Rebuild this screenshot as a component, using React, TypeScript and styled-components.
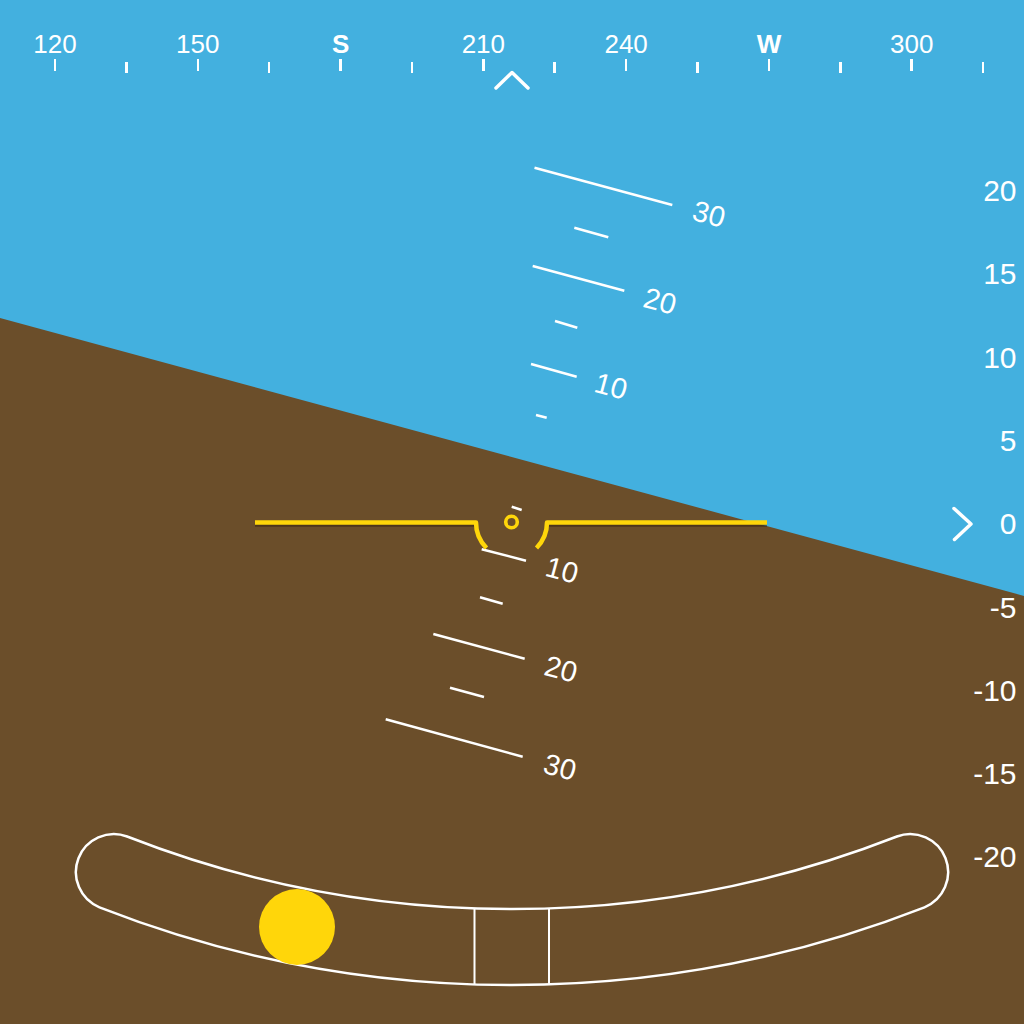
import React from 'react';
import styled, { createGlobalStyle } from 'styled-components';

const SKY = '#43b0df';
const GROUND = '#6b4e2a';
const SYMBOL = '#ffd60a';
const INK = '#ffffff';
const ROLL = 15.1;

const GlobalStyle = createGlobalStyle`
  html, body {
    margin: 0;
    padding: 0;
    background: ${GROUND};
  }
  body {
    font-family: 'Liberation Sans', Arial, sans-serif;
  }
`;

const Screen = styled.div`
  display: grid;
  width: 1024px;
  height: 1024px;
  overflow: hidden;
  background: ${SKY};
  & > * {
    grid-area: 1 / 1;
    min-width: 0;
  }
`;

const Canvas = styled.svg`
  display: block;
  width: 1024px;
  height: 1024px;
`;

const PitchLabel = styled.text`
  font-family: 'Liberation Sans', Arial, sans-serif;
  font-size: 29px;
  fill: ${INK};
`;

/* heading tape */
const HeadingTape = styled.div`
  display: flex;
  flex-direction: column;
  align-self: start;
`;

const HeadingRow = styled.div`
  display: flex;
  align-items: flex-start;
  padding: 30.6px 0 0 19.3px;
`;

const HeadingItem = styled.div`
  flex: none;
  width: 71.4px;
  display: flex;
  flex-direction: column;
  align-items: center;
`;

const HeadingLabel = styled.span<{ $cardinal?: boolean }>`
  height: 26px;
  font-size: 26px;
  line-height: 26px;
  color: ${INK};
  font-weight: ${p => (p.$cardinal ? 700 : 400)};
  white-space: nowrap;
`;

const HeadingTick = styled.span<{ $major?: boolean }>`
  width: 2.5px;
  height: ${p => (p.$major ? 12 : 11)}px;
  margin-top: ${p => (p.$major ? 2.4 : 5.4)}px;
  background: ${INK};
`;

const PointerRow = styled.div`
  display: flex;
  justify-content: center;
  margin-top: -3px;
`;

const Pointer = styled.svg`
  display: block;
  width: 36px;
  height: 20px;
`;

/* pitch scale on the right */
const PitchScale = styled.div`
  display: flex;
  flex-direction: column;
  align-items: flex-end;
  align-self: start;
  padding: 149.4px 7.5px 0 0;
`;

const ScaleRow = styled.div`
  height: 83.3px;
  display: flex;
  align-items: center;
  gap: 27px;
`;

const ScaleValue = styled.span`
  font-size: 30px;
  line-height: 30px;
  color: ${INK};
`;

const Chevron = styled.svg`
  display: block;
  width: 22px;
  height: 36px;
`;

/* slip indicator */
const SlipLayer = styled.div`
  display: flex;
  flex-direction: column;
  justify-content: flex-end;
  padding-bottom: 14px;
`;

const SlipGauge = styled.svg`
  display: block;
  width: 1024px;
  height: 200px;
`;

const headings: (string | null)[] = ['120', null, '150', null, 'S', null, '210', null, '240', null, 'W', null, '300', null];
const scaleValues = [20, 15, 10, 5, 0, -5, -10, -15, -20];

const ladderLines: [number, number, number, number][] = [
  [534.5, 167.7, 672.3, 205],
  [574.3, 227.7, 608.3, 237.3],
  [532.7, 266, 624.3, 290.7],
  [555, 321, 577.3, 327.7],
  [531, 364, 576.7, 376.7],
  [536, 415, 546.7, 417.7],
  [511.7, 506.7, 521.7, 510],
  [481.7, 549.3, 526, 560.7],
  [480, 597.3, 502.7, 603.7],
  [433.3, 634, 524.7, 658.7],
  [450, 687.7, 484, 697],
  [385.7, 719.3, 522.7, 756.7],
];

const ladderLabels: { text: string; x: number; y: number }[] = [
  { text: '30', x: 709, y: 214 },
  { text: '20', x: 660, y: 301 },
  { text: '10', x: 611, y: 386 },
  { text: '10', x: 562, y: 570 },
  { text: '20', x: 561, y: 669 },
  { text: '30', x: 560, y: 767 },
];

const SLIP_OUTLINE =
  'M127.1 836.5 A1057 1057 0 0 0 896.9 836.5 A38 38 0 0 1 924.5 907.3 ' +
  'A1133 1133 0 0 1 99.5 907.3 A38 38 0 0 1 127.1 836.5 Z';

export default function App() {
  return (
    <>
      <GlobalStyle />
      <Screen>
        <Canvas viewBox="0 0 1024 1024">
          <rect x="0" y="0" width="1024" height="1024" fill={SKY} />
          <polygon points="0,318 1024,596 1024,1024 0,1024" fill={GROUND} />

          <g stroke={INK} strokeWidth="2.5">
            {ladderLines.map(([x1, y1, x2, y2], i) => (
              <line key={i} x1={x1} y1={y1} x2={x2} y2={y2} />
            ))}
          </g>
          {ladderLabels.map((l, i) => (
            <PitchLabel
              key={i}
              x={l.x}
              y={l.y}
              textAnchor="middle"
              dominantBaseline="central"
              transform={`rotate(${ROLL} ${l.x} ${l.y})`}
            >
              {l.text}
            </PitchLabel>
          ))}

          <g fill="none" strokeWidth="4.5" strokeLinejoin="round">
            <path d="M255 524.5 H476 M547 524.5 H767" stroke="rgba(40,25,10,0.45)" />
            <path d="M255 522.5 H476 A36 36 0 0 0 486.5 548" stroke={SYMBOL} />
            <path d="M767 522.5 H547 A36 36 0 0 1 536.5 548" stroke={SYMBOL} />
            <circle cx="511.5" cy="522" r="5.8" stroke={SYMBOL} strokeWidth="3.6" />
          </g>
        </Canvas>

        <HeadingTape>
          <HeadingRow>
            {headings.map((h, i) => (
              <HeadingItem key={i}>
                <HeadingLabel $cardinal={h === 'S' || h === 'W'}>{h ?? ''}</HeadingLabel>
                <HeadingTick $major={h !== null} />
              </HeadingItem>
            ))}
          </HeadingRow>
          <PointerRow>
            <Pointer viewBox="0 0 36 20">
              <path d="M2 18 L18 2.5 L34 18" fill="none" stroke={INK} strokeWidth="3.5" strokeLinecap="round" strokeLinejoin="round" />
            </Pointer>
          </PointerRow>
        </HeadingTape>

        <PitchScale>
          {scaleValues.map(v => (
            <ScaleRow key={v}>
              {v === 0 && (
                <Chevron viewBox="0 0 22 36">
                  <path d="M3 2.5 L20 18 L3.5 33.5" fill="none" stroke={INK} strokeWidth="3.5" strokeLinecap="round" strokeLinejoin="round" />
                </Chevron>
              )}
              <ScaleValue>{v}</ScaleValue>
            </ScaleRow>
          ))}
        </PitchScale>

        <SlipLayer>
          <SlipGauge viewBox="0 810 1024 200">
            <path d={SLIP_OUTLINE} fill="none" stroke={INK} strokeWidth="2.5" />
            <path d="M474.5 908 V985 M549 908 V985" stroke={INK} strokeWidth="2" />
            <circle cx="297" cy="927" r="38" fill={SYMBOL} />
          </SlipGauge>
        </SlipLayer>
      </Screen>
    </>
  );
}
